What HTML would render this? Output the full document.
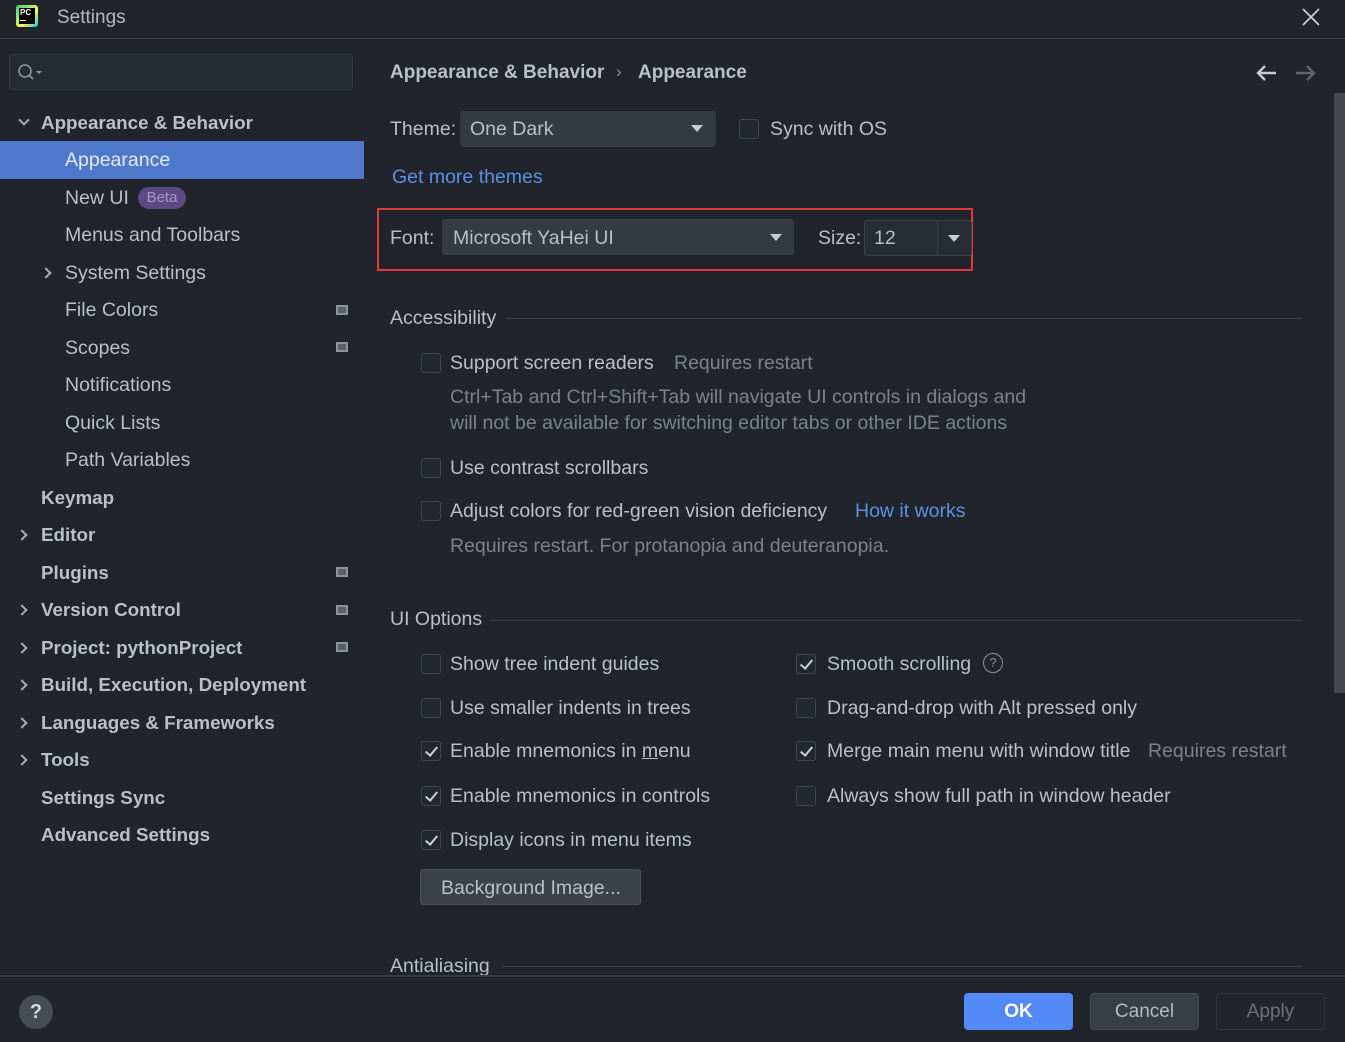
<!DOCTYPE html>
<html><head><meta charset="utf-8"><style>
*{margin:0;padding:0;box-sizing:border-box}
body{width:1345px;height:1042px;background:#21252b;font-family:"Liberation Sans","Noto Sans CJK SC",sans-serif;color:#bbbfc6;overflow:hidden;position:relative;font-size:19.5px}
.a{position:absolute;white-space:nowrap;line-height:24px}
.b{font-weight:bold;font-size:18.8px}
.g{color:#7d828a}
.l{color:#5c8fe6}
.cb{position:absolute;width:20px;height:20px;border:1px solid #41454c;border-radius:3px;background:#23272e}
.cb.c::after{content:"";position:absolute;left:6px;top:2px;width:5px;height:10px;border:solid #cdd0d5;border-width:0 2px 2px 0;transform:rotate(40deg)}
.chev{position:absolute;width:8px;height:8px;border:solid #a9adb4;border-width:0 2px 2px 0}
.ic{position:absolute;width:12px;height:10px;border:2px solid #8e9299;background:#5b5f66}
.sep{position:absolute;height:1px;background:#3a3e45}
.dd{position:absolute;background:#363a42;border-radius:3px}
.tri{position:absolute;width:0;height:0;border-left:6px solid transparent;border-right:6px solid transparent;border-top:7px solid #c8cbd0}
</style></head><body>
<div style="position:absolute;left:16px;top:5px;width:22px;height:22px;background:linear-gradient(135deg,#21d789,#fcf84a 60%,#07c3f2);border-radius:3px"></div>
<div style="position:absolute;left:19px;top:8px;width:16px;height:16px;background:#000;color:#fff;font-size:8px;font-weight:bold;line-height:9px;padding-left:1px">PC<div style="width:6px;height:1px;background:#fff;margin-top:3px"></div></div>
<div class="a" style="left:57px;top:6px;font-size:19px;color:#b4b8bf">Settings</div>
<svg style="position:absolute;left:1302px;top:8px" width="18" height="18"><path d="M1 1L17 17M17 1L1 17" stroke="#c8cbd0" stroke-width="1.8"/></svg>
<div class="sep" style="left:0;top:38px;width:1345px"></div>
<div style="position:absolute;left:9px;top:54px;width:344px;height:36px;border:1px solid #343840;border-radius:4px;background:#262a31"></div>
<svg style="position:absolute;left:17px;top:63px" width="26" height="20"><circle cx="8" cy="8" r="6" fill="none" stroke="#8e9299" stroke-width="1.6"/><line x1="12.5" y1="12.5" x2="16" y2="16" stroke="#8e9299" stroke-width="1.8"/><path d="M19 8h6l-3 3z" fill="#8e9299"/></svg>
<div class="chev" style="left:20px;top:116px;transform:rotate(45deg)"></div>
<div class="a b" style="left:41px;top:111px">Appearance &amp; Behavior</div>
<div style="position:absolute;left:0;top:141px;width:364px;height:38px;background:#4d78cc"></div>
<div class="a" style="left:65px;top:148px;color:#e6e9ee">Appearance</div>
<div class="a" style="left:65px;top:186px">New UI</div>
<div style="position:absolute;left:138px;top:187px;width:48px;height:22px;border-radius:11px;background:#5b4a84;color:#a796cf;font-size:15px;line-height:22px;text-align:center">Beta</div>
<div class="a" style="left:65px;top:223px">Menus and Toolbars</div>
<div class="chev" style="left:42px;top:269px;transform:rotate(-45deg)"></div>
<div class="a" style="left:65px;top:261px">System Settings</div>
<div class="a" style="left:65px;top:298px">File Colors</div><div class="ic" style="left:336px;top:305px"></div>
<div class="a" style="left:65px;top:336px">Scopes</div><div class="ic" style="left:336px;top:342px"></div>
<div class="a" style="left:65px;top:373px">Notifications</div>
<div class="a" style="left:65px;top:411px">Quick Lists</div>
<div class="a" style="left:65px;top:448px">Path Variables</div>
<div class="a b" style="left:41px;top:486px">Keymap</div>
<div class="chev" style="left:18px;top:531px;transform:rotate(-45deg)"></div>
<div class="a b" style="left:41px;top:523px">Editor</div>
<div class="a b" style="left:41px;top:561px">Plugins</div><div class="ic" style="left:336px;top:567px"></div>
<div class="chev" style="left:18px;top:606px;transform:rotate(-45deg)"></div>
<div class="a b" style="left:41px;top:598px">Version Control</div><div class="ic" style="left:336px;top:605px"></div>
<div class="chev" style="left:18px;top:644px;transform:rotate(-45deg)"></div>
<div class="a b" style="left:41px;top:636px">Project: pythonProject</div><div class="ic" style="left:336px;top:642px"></div>
<div class="chev" style="left:18px;top:681px;transform:rotate(-45deg)"></div>
<div class="a b" style="left:41px;top:673px">Build, Execution, Deployment</div>
<div class="chev" style="left:18px;top:719px;transform:rotate(-45deg)"></div>
<div class="a b" style="left:41px;top:711px">Languages &amp; Frameworks</div>
<div class="chev" style="left:18px;top:756px;transform:rotate(-45deg)"></div>
<div class="a b" style="left:41px;top:748px">Tools</div>
<div class="a b" style="left:41px;top:786px">Settings Sync</div>
<div class="a b" style="left:41px;top:823px">Advanced Settings</div>
<div class="a b" style="left:390px;top:61px;font-size:19px">Appearance &amp; Behavior</div>
<div class="a" style="left:616px;top:60px;font-size:17px;color:#8e9299">›</div>
<div class="a b" style="left:638px;top:61px;font-size:19px">Appearance</div>
<svg style="position:absolute;left:1256px;top:63px" width="60" height="20"><path d="M20 10H2M9 3L2 10L9 17" fill="none" stroke="#c8cbd0" stroke-width="2.4"/><path d="M40 10H58M51 3L58 10L51 17" fill="none" stroke="#5f636a" stroke-width="2.4"/></svg>
<div style="position:absolute;left:1334px;top:93px;width:11px;height:600px;background:#45484e"></div>
<div class="a" style="left:390px;top:117px">Theme:</div>
<div class="dd" style="left:460px;top:111px;width:256px;height:36px"></div>
<div class="a" style="left:470px;top:117px">One Dark</div>
<div class="tri" style="left:691px;top:125px"></div>
<div class="cb" style="left:739px;top:119px"></div>
<div class="a" style="left:770px;top:117px">Sync with OS</div>
<div class="a l" style="left:392px;top:165px">Get more themes</div>
<div style="position:absolute;left:377px;top:208px;width:596px;height:63px;border:2px solid #e0393e"></div>
<div class="a" style="left:390px;top:226px">Font:</div>
<div class="dd" style="left:442px;top:219px;width:352px;height:36px"></div>
<div class="a" style="left:453px;top:226px">Microsoft YaHei UI</div>
<div class="tri" style="left:770px;top:234px"></div>
<div class="a" style="left:818px;top:226px">Size:</div>
<div style="position:absolute;left:864px;top:220px;width:108px;height:36px;border:1px solid #3a3e45;border-radius:3px;background:#282c33"></div>
<div style="position:absolute;left:937px;top:221px;width:1px;height:34px;background:#3a3e45"></div>
<div class="a" style="left:874px;top:226px">12</div>
<div class="tri" style="left:948px;top:235px"></div>
<div class="a" style="left:390px;top:306px">Accessibility</div>
<div class="sep" style="left:506px;top:318px;width:796px"></div>
<div class="cb" style="left:421px;top:353px"></div>
<div class="a" style="left:450px;top:351px">Support screen readers</div>
<div class="a g" style="left:674px;top:351px">Requires restart</div>
<div class="a g" style="left:450px;top:385px">Ctrl+Tab and Ctrl+Shift+Tab will navigate UI controls in dialogs and</div>
<div class="a g" style="left:450px;top:411px">will not be available for switching editor tabs or other IDE actions</div>
<div class="cb" style="left:421px;top:458px"></div>
<div class="a" style="left:450px;top:456px">Use contrast scrollbars</div>
<div class="cb" style="left:421px;top:501px"></div>
<div class="a" style="left:450px;top:499px">Adjust colors for red-green vision deficiency</div>
<div class="a l" style="left:855px;top:499px">How it works</div>
<div class="a g" style="left:450px;top:534px">Requires restart. For protanopia and deuteranopia.</div>
<div class="a" style="left:390px;top:607px">UI Options</div>
<div class="sep" style="left:490px;top:620px;width:812px"></div>
<div class="cb" style="left:421px;top:654px"></div><div class="a" style="left:450px;top:652px">Show tree indent guides</div>
<div class="cb" style="left:421px;top:698px"></div><div class="a" style="left:450px;top:696px">Use smaller indents in trees</div>
<div class="cb c" style="left:421px;top:741px"></div><div class="a" style="left:450px;top:739px">Enable mnemonics in <u>m</u>enu</div>
<div class="cb c" style="left:421px;top:786px"></div><div class="a" style="left:450px;top:784px">Enable mnemonics in controls</div>
<div class="cb c" style="left:421px;top:830px"></div><div class="a" style="left:450px;top:828px">Display icons in menu items</div>
<div style="position:absolute;left:420px;top:869px;width:221px;height:36px;background:#3d4149;border-radius:3px;border:1px solid #4a4e55"></div>
<div class="a" style="left:441px;top:876px">Background Image...</div>
<div class="cb c" style="left:796px;top:654px"></div><div class="a" style="left:827px;top:652px">Smooth scrolling</div>
<div style="position:absolute;left:983px;top:653px;width:20px;height:20px;border:1.5px solid #8e9299;border-radius:50%;color:#8e9299;font-size:13px;line-height:17px;text-align:center">?</div>
<div class="cb" style="left:796px;top:698px"></div><div class="a" style="left:827px;top:696px">Drag-and-drop with Alt pressed only</div>
<div class="cb c" style="left:796px;top:741px"></div><div class="a" style="left:827px;top:739px">Merge main menu with window title</div>
<div class="a g" style="left:1148px;top:739px">Requires restart</div>
<div class="cb" style="left:796px;top:786px"></div><div class="a" style="left:827px;top:784px">Always show full path in window header</div>
<div class="a" style="left:390px;top:954px">Antialiasing</div>
<div class="sep" style="left:502px;top:966px;width:800px"></div>
<div style="position:absolute;left:0;top:975px;width:1345px;height:67px;background:#21252b;border-top:2px solid #353940"></div>
<div style="position:absolute;left:19px;top:995px;width:34px;height:34px;border-radius:50%;background:#474b52;color:#d5d8dc;font-weight:bold;font-size:20px;line-height:34px;text-align:center">?</div>
<div style="position:absolute;left:964px;top:993px;width:109px;height:37px;border-radius:4px;background:#548af7;color:#fff;font-weight:bold;font-size:19px;line-height:37px;text-align:center">OK</div>
<div style="position:absolute;left:1090px;top:993px;width:109px;height:37px;border-radius:4px;background:#393d45;border:1px solid #464a51;color:#b4b8bf;font-size:19px;line-height:35px;text-align:center">Cancel</div>
<div style="position:absolute;left:1216px;top:993px;width:109px;height:37px;border-radius:4px;border:1px solid #30343b;color:#6c7078;font-size:19px;line-height:35px;text-align:center">Apply</div>
</body></html>
